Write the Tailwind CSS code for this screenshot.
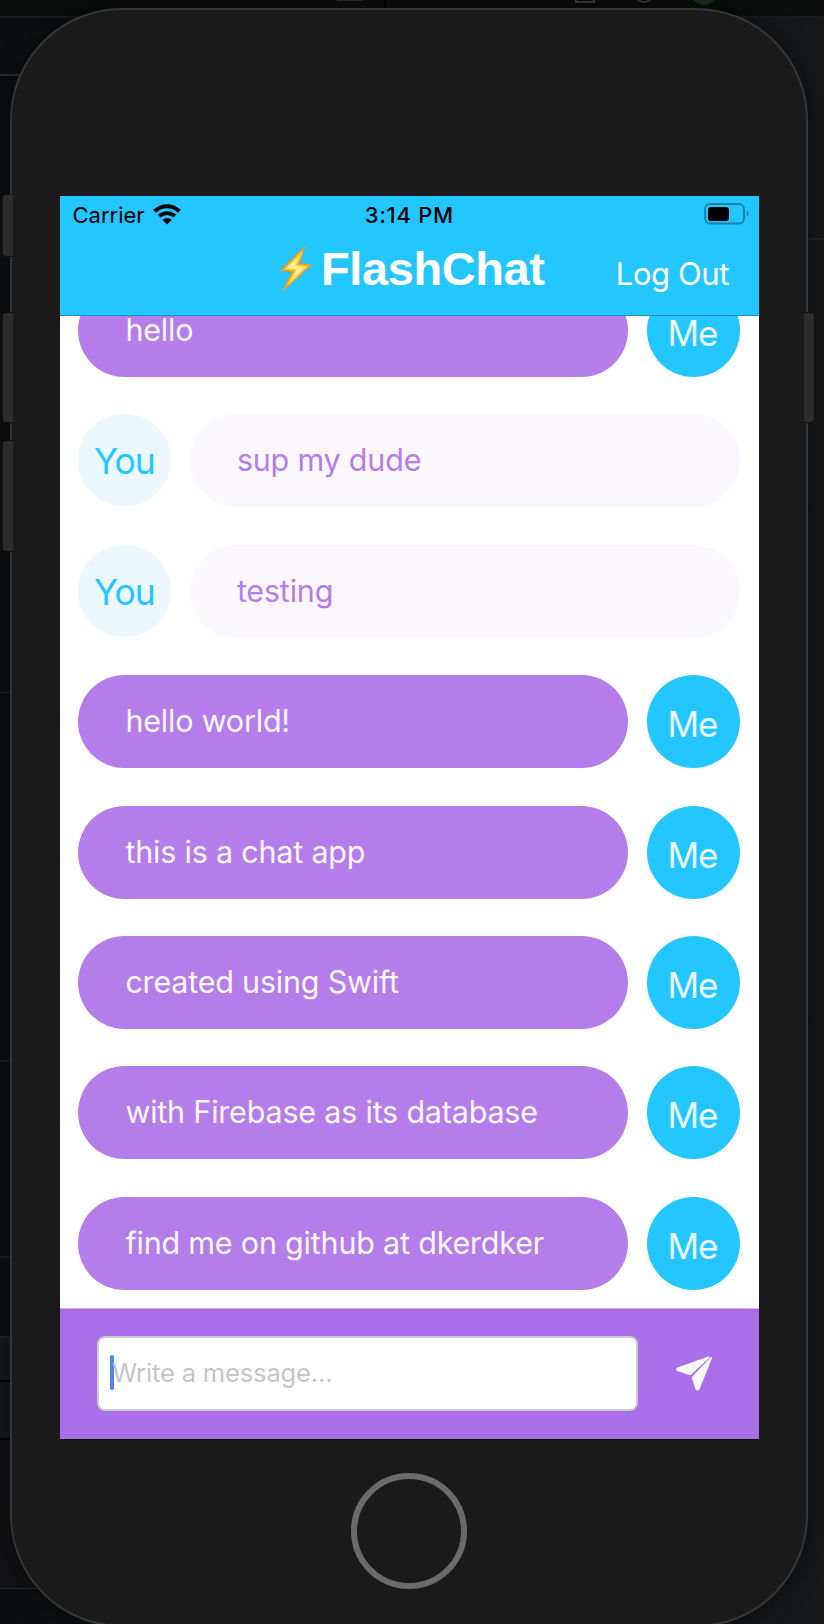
<!DOCTYPE html>
<html lang="en">
<head>
<meta charset="utf-8">
<title>FlashChat</title>
<script src="https://cdn.jsdelivr.net/npm/@tailwindcss/browser@4"></script>
</head>
<body class="bg-[#0d0f10]">
<div class="relative w-[824px] h-[1624px] overflow-hidden bg-linear-to-r from-[#0d0f10] to-[#17181a] font-['Inter',sans-serif]">
  <!-- desktop window behind the simulator -->
  <div class="absolute left-0 top-0 w-full h-[16px] bg-[#0b0d0d]"></div>
  <div class="absolute left-0 top-[16px] w-full h-[2px] bg-[#1b1c1d]"></div>
  <div class="absolute left-0 top-[74px] w-[22px] h-[2px] bg-[#2a2c2d]"></div>
  <div class="absolute left-[337px] top-0 w-[26px] h-px bg-[#2a2c2d]"></div>
  <div class="absolute left-[384px] top-0 w-[2px] h-[9px] bg-black"></div>
  <div class="absolute left-[575px] -top-[17px] size-[20px] border-2 border-[#3c3d3e]"></div>
  <div class="absolute left-[634px] -top-[17px] size-[20px] rounded-full border-2 border-[#3c3d3e]"></div>
  <div class="absolute left-[691px] -top-[21px] size-[26px] rounded-full bg-[#1a3014]"></div>
  <div class="absolute right-0 top-[238px] w-[16px] h-[2px] bg-[#212223]"></div>
  <div class="absolute left-0 top-[692px] w-[10px] h-px bg-[#1f2021]"></div>
  <div class="absolute left-0 top-[1060px] w-[10px] h-[2px] bg-[#1b1c1d]"></div>
  <div class="absolute left-0 top-[1256px] w-[10px] h-[2px] bg-[#1b1c1d]"></div>
  <div class="absolute left-0 top-[1336px] w-[10px] h-[2px] bg-[#242527]"></div>
  <div class="absolute left-0 top-[1338px] w-[10px] h-[100px] bg-[#17191b]"></div>
  <div class="absolute left-0 top-[1380px] w-[10px] h-[2px] bg-black"></div>
  <div class="absolute left-0 top-[1438px] w-[10px] h-[2px] bg-black"></div>
  <div class="absolute left-0 top-[1440px] w-[120px] h-[148px] bg-[#131315]"></div>
  <div class="absolute left-0 top-[1588px] w-[40px] h-px bg-[#2a2b2c]"></div>

  <!-- phone body -->
  <div class="absolute left-[10px] top-[8px] w-[798px] h-[1619px] rounded-[112px] border-2 border-[#343535] bg-[#1a1a1a] shadow-[0_0_24px_2px_rgba(0,0,0,0.45)]"></div>
  <div class="absolute left-[2px] top-[194px] w-[11px] h-[63px] rounded-l-[4px] border border-r-0 border-[#121212] bg-[#2b2b2b]"></div>
  <div class="absolute left-[2px] top-[312px] w-[11px] h-[111px] rounded-l-[4px] border border-r-0 border-[#121212] bg-[#2b2b2b]"></div>
  <div class="absolute left-[2px] top-[440px] w-[11px] h-[112px] rounded-l-[4px] border border-r-0 border-[#121212] bg-[#2b2b2b]"></div>
  <div class="absolute left-[804px] top-[312px] w-[11px] h-[111px] rounded-r-[4px] border border-l-0 border-[#101010] bg-[#2b2b2b]"></div>
  <div class="absolute left-[351px] top-[1473px] size-[116px] rounded-full border-[6px] border-[#6b6b6b]"></div>

  <!-- screen -->
  <main class="absolute left-[60px] top-[196px] w-[699px] h-[1244px] flex flex-col bg-white border-b border-black overflow-hidden">
    <header class="relative z-10 h-[120px] shrink-0 flex flex-col bg-[#23c6ff] border-b border-[#2390b8]">
      <div class="h-[38px] pt-px grid grid-cols-3 items-center pl-[12.5px] pr-[10px] text-black text-[22px]">
        <div class="flex items-center gap-[8px]">
          <span>Carrier</span>
          <svg class="w-[28px] h-[21px] -mt-[3px]" viewBox="0 0 28 21" fill="none" stroke="#000">
            <path d="M1.6 7.2C8.8 .5 19.2 .5 26.4 7.2" stroke-width="4"/>
            <path d="M6.2 12.2C10.6 8.1 17.4 8.1 21.8 12.2" stroke-width="3.7"/>
            <path d="M14 20.5L9.2 15.8C12 13.6 16 13.6 18.8 15.8Z" fill="#000" stroke="none"/>
          </svg>
        </div>
        <span class="text-center font-medium tracking-[0.7px] whitespace-nowrap -ml-[3px]">3:14 PM</span>
        <svg class="justify-self-end w-[45px] h-[22px] -mt-[3px]" viewBox="0 0 45 22" fill="none">
          <rect x="1" y="1" width="39" height="19.5" rx="5" stroke="#1b82a5" stroke-width="1.8"/>
          <rect x="4" y="4" width="21" height="14" rx="3" fill="#000"/>
          <path d="M42.8 7.5C45 9 45 12.5 42.8 14Z" fill="#1b82a5"/>
        </svg>
      </div>
      <div class="relative flex-1 flex items-start text-white pl-[219px]">
        <svg class="mt-[11px] w-[34px] h-[48px] shrink-0" viewBox="0 0 34 48">
          <path d="M26.5 .5L1 25.7L12.6 27L3 47.5L33 19.5L21 18.3Z" fill="#f59a1b"/>
          <path d="M23 7L6 23.8L16.6 25L9 39.8L28 21.4L17.2 20.2Z" fill="#fff0a0" stroke="#fdd032" stroke-width="1.6"/>
        </svg>
        <h1 class="ml-[8px] mt-[8px] leading-[54px] text-[47px] font-bold font-['Liberation_Sans',sans-serif] tracking-[-0.4px]">FlashChat</h1>
        <span class="ml-auto mr-[30px] mt-[20px] text-[31px] leading-[40px] tracking-[-0.4px] whitespace-nowrap">Log Out</span>
      </div>
    </header>

    <section class="flex-1 min-h-0 flex flex-col justify-end gap-[37.43px] pl-[18.4px] pb-[18.2px] text-[30.5px] tracking-[-0.2px] leading-[92px]">
      <div class="flex gap-[18.5px] h-[93px] shrink-0"><p class="w-[550px] rounded-full bg-[#b47dea] text-[#faf7fe] pl-[47px]">hello</p><div class="w-[93px] rounded-full bg-[#23c6ff] text-[#ecf9fe] text-[35px] tracking-[-1px] text-center leading-[98px] pr-[2px]">Me</div></div>
      <div class="flex gap-[18.5px] h-[93px] shrink-0"><div class="w-[93px] h-[92px] rounded-full bg-[#ebf9fe] text-[#23c6ff] text-[35.5px] tracking-[-1px] text-center leading-[95px] pr-[1px]">You</div><p class="w-[550px] rounded-full bg-[#faf7fe] text-[#b47dea] pl-[47px]">sup my dude</p></div>
      <div class="flex gap-[18.5px] h-[93px] shrink-0"><div class="w-[93px] h-[92px] rounded-full bg-[#ebf9fe] text-[#23c6ff] text-[35.5px] tracking-[-1px] text-center leading-[95px] pr-[1px]">You</div><p class="w-[550px] rounded-full bg-[#faf7fe] text-[#b47dea] pl-[47px]">testing</p></div>
      <div class="flex gap-[18.5px] h-[93px] shrink-0"><p class="w-[550px] rounded-full bg-[#b47dea] text-[#faf7fe] pl-[47px]">hello world!</p><div class="w-[93px] rounded-full bg-[#23c6ff] text-[#ecf9fe] text-[35px] tracking-[-1px] text-center leading-[98px] pr-[2px]">Me</div></div>
      <div class="flex gap-[18.5px] h-[93px] shrink-0"><p class="w-[550px] rounded-full bg-[#b47dea] text-[#faf7fe] pl-[47px]">this is a chat app</p><div class="w-[93px] rounded-full bg-[#23c6ff] text-[#ecf9fe] text-[35px] tracking-[-1px] text-center leading-[98px] pr-[2px]">Me</div></div>
      <div class="flex gap-[18.5px] h-[93px] shrink-0"><p class="w-[550px] rounded-full bg-[#b47dea] text-[#faf7fe] pl-[47px]">created using Swift</p><div class="w-[93px] rounded-full bg-[#23c6ff] text-[#ecf9fe] text-[35px] tracking-[-1px] text-center leading-[98px] pr-[2px]">Me</div></div>
      <div class="flex gap-[18.5px] h-[93px] shrink-0"><p class="w-[550px] rounded-full bg-[#b47dea] text-[#faf7fe] pl-[47px]">with Firebase as its database</p><div class="w-[93px] rounded-full bg-[#23c6ff] text-[#ecf9fe] text-[35px] tracking-[-1px] text-center leading-[98px] pr-[2px]">Me</div></div>
      <div class="flex gap-[18.5px] h-[93px] shrink-0"><p class="w-[550px] rounded-full bg-[#b47dea] text-[#faf7fe] pl-[47px]">find me on github at dkerdker</p><div class="w-[93px] rounded-full bg-[#23c6ff] text-[#ecf9fe] text-[35px] tracking-[-1px] text-center leading-[98px] pr-[2px]">Me</div></div>
    </section>

    <footer class="h-[131px] shrink-0 flex items-center bg-[#aa6ee8] border-t border-[#cfabf1] pl-[37px] pb-[2px]">
      <div class="w-[541px] h-[75px] rounded-[8px] border-2 border-[#cccccc] bg-white flex items-center pl-[11px]">
        <span class="w-[4px] h-[35px] -mt-[2px] rounded-full bg-[#5581f0]"></span>
        <span class="text-[25.5px] tracking-[-0.15px] text-[#c5c5c7] -ml-[2px]">Write a message...</span>
      </div>
      <svg class="ml-[38px] w-[36px] h-[35px]" viewBox="0 0 36 35" fill="#f9f7fe">
        <path d="M33 .3L2 11.3C-.6 12.3-.6 14.6 1.8 15.3L13.2 19.1Q14.4 19.4 15.3 18.5L33.6 1.6Z"/>
        <path d="M34.9 .8Q36.4 1.5 35.6 3.2L23.7 32.8C22.7 35.1 20 35.1 19.3 32.7L16 22.3Q15.8 21.1 16.6 20.2L34.2 1.8Z"/>
      </svg>
    </footer>
  </main>
</div>
</body>
</html>
